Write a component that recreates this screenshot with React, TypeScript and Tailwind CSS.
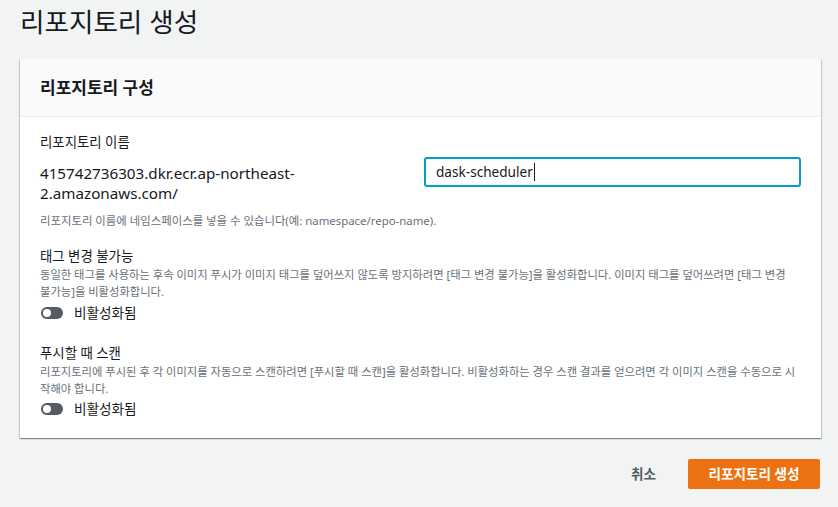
import React from "react";

const font = { fontFamily: '"Noto Sans", "Noto Sans CJK KR", sans-serif' };

function Toggle() {
  return (
    <div className="flex items-center h-5">
      <div className="relative w-[22px] h-[12px] rounded-full bg-[#545b64] ml-[1px]">
        <div className="absolute left-[2px] top-[2px] w-[8px] h-[8px] rounded-full bg-white" />
      </div>
      <span className="ml-[11px] text-[13.6px] leading-5 text-[#16191f]">비활성화됨</span>
    </div>
  );
}

export default function App() {
  return (
    <div className="w-[838px] h-[507px] bg-[#f2f3f3] overflow-hidden" style={font}>
      <div className="pl-5 pr-[17px] pt-[6px]">
        <h1 className="text-[26.6px] leading-8 text-[#16191f] font-normal">리포지토리 생성</h1>
        <div className="mt-[21px] bg-white shadow-[0_1px_1px_0_rgba(0,28,36,0.3),1px_1px_1px_0_rgba(0,28,36,0.15),-1px_1px_1px_0_rgba(0,28,36,0.15)]">
          <div className="h-[58px] bg-[#fafafa] border-b border-[#eaeded] flex items-center px-5">
            <h2 className="text-[17px] font-bold text-[#16191f] leading-6">리포지토리 구성</h2>
          </div>
          <div className="px-5 pt-[15px] pb-[19px]">
            <div className="text-[13.4px] leading-5 text-[#16191f]">리포지토리 이름</div>
            <div className="mt-[5px] grid grid-cols-[364px_1fr] gap-5">
              <div className="pt-[6px] text-[15.2px] leading-5 text-[#16191f] whitespace-nowrap">
                415742736303.dkr.ecr.ap-northeast-
                <br />
                2.amazonaws.com/
              </div>
              <div className="h-[30px] border-2 border-[#00a1c9] rounded-[3px] flex items-center px-[10px]">
                <span className="text-[13.6px] text-[#16191f] leading-5">dask-scheduler</span>
                <span className="w-px h-[18px] bg-[#16191f] ml-px" />
              </div>
            </div>
            <div className="mt-[10px] text-[11.4px] leading-4 text-[#687078] whitespace-nowrap">
              리포지토리 이름에 네임스페이스를 넣을 수 있습니다(예: namespace/repo-name).
            </div>

            <div className="mt-[17px] text-[13.4px] leading-5 text-[#16191f]">태그 변경 불가능</div>
            <div className="text-[11.3px] leading-[17px] text-[#687078] whitespace-nowrap">
              동일한 태그를 사용하는 후속 이미지 푸시가 이미지 태그를 덮어쓰지 않도록 방지하려면 [태그 변경 불가능]을 활성화합니다. 이미지 태그를 덮어쓰려면 [태그 변경
              <br />
              불가능]을 비활성화합니다.
            </div>
            <div className="mt-[3px]">
              <Toggle />
            </div>

            <div className="mt-[20px] text-[13.4px] leading-5 text-[#16191f]">푸시할 때 스캔</div>
            <div className="text-[11.3px] leading-[17px] text-[#687078] whitespace-nowrap">
              리포지토리에 푸시된 후 각 이미지를 자동으로 스캔하려면 [푸시할 때 스캔]을 활성화합니다. 비활성화하는 경우 스캔 결과를 얻으려면 각 이미지 스캔을 수동으로 시
              <br />
              작해야 합니다.
            </div>
            <div className="mt-[2px]">
              <Toggle />
            </div>
          </div>
        </div>
        <div className="mt-[21px] flex justify-end items-center pr-px">
          <button className="text-[13.6px] font-bold text-[#545b64] mr-8 leading-5">취소</button>
          <button className="w-[132px] h-[30px] rounded-[2px] bg-[#ec7211] text-white text-[13.6px] font-bold leading-5">
            리포지토리 생성
          </button>
        </div>
      </div>
    </div>
  );
}
